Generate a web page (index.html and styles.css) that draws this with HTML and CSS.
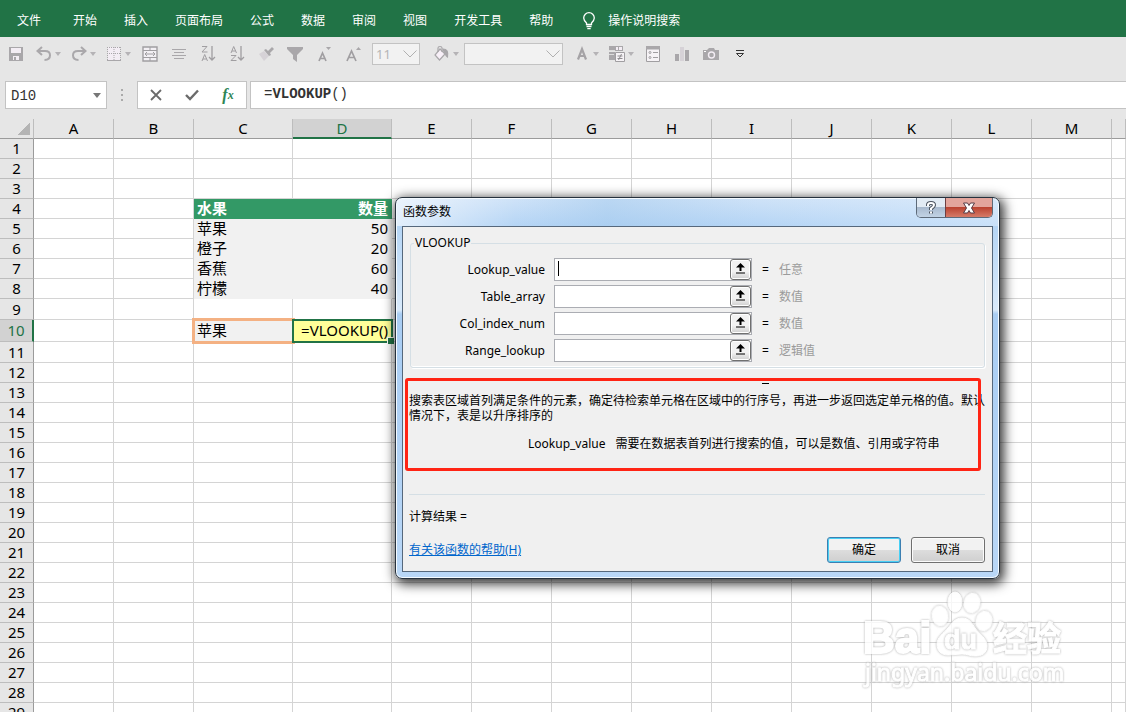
FILE: index.html
```html
<!DOCTYPE html>
<html lang="zh-CN">
  <head>
    <meta charset="utf-8">
    <title>Excel</title>
    <link rel="stylesheet" href="styles.css">
  </head>
  <body>
    <nav class="ribbon">
      <a class="file" href="#">文件</a>
      <a href="#">开始</a>
      <a href="#">插入</a>
      <a href="#">页面布局</a>
      <a href="#">公式</a>
      <a href="#">数据</a>
      <a href="#">审阅</a>
      <a href="#">视图</a>
      <a href="#">开发工具</a>
      <a href="#">帮助</a>
      <a class="tell-me" href="#">
        <svg width="14" height="18" viewBox="0 0 14 18" fill="none" stroke="#fff" stroke-width="1.3"><path d="M4.5 12.5V11C3 9.500 1.700 8.200 1.700 6a5.300 5.300 0 0 1 10.600 0c0 2.200-1.300 3.500-2.800 5v1.500zM4.500 14.500h5M5.300 16.700h3.400"/></svg>
        操作说明搜索
      </a>
    </nav>

    <div class="toolbar">
      <button type="button" aria-label="保存"><svg width="18" height="18" viewBox="0 0 18 18"><path d="M2 2h14v14H2z" fill="#a9a7aa"/><path d="M4 3h10v5H4zM6 11h6v4H6z" fill="#f3edf4"/><path d="M7 12h2v3H7z" fill="#a9a7aa"/></svg></button>
      <button type="button" class="split" aria-label="撤消"><svg width="18" height="18" viewBox="0 0 18 18" fill="none" stroke="#aaa8ab" stroke-width="2"><path d="M7 2L2.500 6 7 10M3 6h7c3 0 5 1.500 5 4.300S13 15 9.500 15"/></svg><i class="arrow"></i></button>
      <button type="button" class="split" aria-label="恢复"><svg width="18" height="18" viewBox="0 0 18 18" fill="none" stroke="#aaa8ab" stroke-width="2"><path d="M11 2l4.500 4L11 10M15 6H8c-3 0-5 1.500-5 4.300S5 15 8.500 15"/></svg><i class="arrow"></i></button>
      <button type="button" class="split" aria-label="边框"><svg width="18" height="18" viewBox="0 0 18 18"><path d="M3 2h12v13H3z" fill="#f3edf4"/><path d="M2 2.500h14M2 8.500h14M2.500 2v13M9 2v13M15.500 2v13" stroke="#a9a7aa" stroke-dasharray="1 1"/><path d="M2 15.500h14" stroke="#a9a7aa"/></svg><i class="arrow"></i></button>
      <button type="button" aria-label="合并后居中"><svg width="18" height="18" viewBox="0 0 18 18" fill="none" stroke="#a09ea1"><path d="M2 2h14v14H2z" fill="#f3f0f4" stroke-width="1.400"/><path d="M2 5.500h14M2 12.500h14M9 2v3M9 13v3M4 9h10M6 7L4 9l2 2M12 7l2 2-2 2"/></svg></button>
      <button type="button" aria-label="居中"><svg width="18" height="18" viewBox="0 0 18 18" stroke="#a9a7aa"><path d="M2 4.500h14M4 7.500h10M2 10.500h14M4 13.500h10"/></svg></button>
      <button type="button" aria-label="降序"><svg width="18" height="18" viewBox="0 0 18 18" fill="none" stroke="#a09ea1"><path d="M3 1.500h5l-5 5.500h5.500M3 16l2.700-6.500L8.500 16M4 14h3.500"/><path d="M13 1v14M10 12l3 3 3-3" stroke-width="1.300"/></svg></button>
      <button type="button" aria-label="升序"><svg width="18" height="18" viewBox="0 0 18 18" fill="none" stroke="#a09ea1"><path d="M3 8l2.700-6.500L8.500 8M4 6h3.500M3 10.500h5l-5 5h5.500"/><path d="M13 1v14M10 12l3 3 3-3" stroke-width="1.300"/></svg></button>
      <button type="button" aria-label="格式刷"><svg width="18" height="18" viewBox="0 0 18 18"><path d="M2 9l5-3 5 5-5 5z" fill="#d6d2d7"/><path d="M7 5l2-1 2 2 4-4 2 2-4 4 1 2-2 1z" fill="#a9a7aa"/></svg></button>
      <button type="button" aria-label="筛选"><svg width="18" height="18" viewBox="0 0 18 18"><path d="M1 2h16v2l-6 6v7l-4-3v-4L1 4z" fill="#a9a7aa"/></svg></button>
      <button type="button" aria-label="减小字号"><svg width="18" height="18" viewBox="0 0 18 18" fill="none" stroke="#a09ea1" stroke-width="1.700"><path d="M4 16l3.500-8L11 16M5 13.500h5"/><path d="M11 2h5l-2.500 3z" fill="#a9a7aa" stroke="none"/></svg></button>
      <button type="button" aria-label="增大字号"><svg width="18" height="18" viewBox="0 0 18 18" fill="none" stroke="#a09ea1" stroke-width="1.700"><path d="M3 16l4.500-10L12 16M4.500 12.500h6"/><path d="M12 5h5l-2.500-3z" fill="#a9a7aa" stroke="none"/></svg></button>
      <span class="combo size">
        <select aria-label="字号"><option>11</option></select>
        <svg width="14" height="8" viewBox="0 0 14 8" fill="none" stroke="#b0b0b0"><path d="M.5 .5L7 7l6.500-6.500"/></svg>
      </span>
      <button type="button" class="split" aria-label="填充颜色"><svg width="18" height="18" viewBox="0 0 18 18" fill="none" stroke="#a9a7aa" stroke-width="1.200"><path d="M7 4l5 5-5.500 6L2 10z" fill="#f8f0f8"/><path d="M5 7V3q0-1.500 2-1.500T9 3v4"/><path d="M10 4q6 0 4.500 8Q12 10 10 4z" fill="#a9a7aa"/></svg><i class="arrow"></i></button>
      <span class="combo style">
        <select aria-label="样式"><option></option></select>
        <svg width="14" height="8" viewBox="0 0 14 8" fill="none" stroke="#b0b0b0"><path d="M.5 .5L7 7l6.500-6.500"/></svg>
      </span>
      <button type="button" class="split first" aria-label="字体颜色"><svg width="18" height="18" viewBox="0 0 18 18" fill="none" stroke="#a5a3a6" stroke-width="2.200"><path d="M5 14.500L9 4l4 10.500M6 11h6"/></svg><i class="arrow"></i></button>
      <button type="button" class="split" aria-label="条件格式"><svg width="18" height="18" viewBox="0 0 18 18"><path d="M1 1h14v5H1zM1 7h6v8H1z" fill="#a9a7aa"/><path d="M8 2h2v3H8zM11 2h3v3h-3z" fill="#f3edf4"/><path d="M1 5.500h6M1 9.500h5" stroke="#ddd"/><path d="M7.500 7.500h9v9h-9z" fill="#f6f3f6" stroke="#a09ea1"/><path d="M9.500 11h5M9.500 13.500h5M13.500 9l-3 6" stroke="#8f8d90"/></svg><i class="arrow"></i></button>
      <button type="button" aria-label="窗体"><svg width="18" height="18" viewBox="0 0 18 18" fill="none" stroke="#a09ea1"><path d="M2.500 1.500h13v15h-13z" fill="#f6f3f6"/><path d="M2 1h14v3.500H2z" fill="#a9a7aa" stroke="none"/><path d="M9 7.500h5M9 12.500h5"/><circle cx="6" cy="7.500" r="1"/><circle cx="6" cy="12.500" r="1"/></svg></button>
      <button type="button" aria-label="图表"><svg width="18" height="18" viewBox="0 0 18 18"><path d="M2 9h4v7H2zM12 5h4v11h-4z" fill="#a9a7aa"/><path d="M7 2h4v14H7z" fill="#d6d2d7"/></svg></button>
      <button type="button" aria-label="照相机"><svg width="18" height="18" viewBox="0 0 18 18"><path d="M1 5h4l2-2h5l1 2h4v10H1z" fill="#a9a7aa"/><circle cx="9.500" cy="10" r="3" fill="#a9a7aa" stroke="#f3edf4" stroke-width="1.400"/><path d="M2 6h2v1H2z" fill="#fff"/></svg></button>
      <button type="button" aria-label="自定义快速访问工具栏"><svg width="10" height="10" viewBox="0 0 10 10" fill="none" stroke="#333"><path d="M1 1.500h8M1.500 4.500h7L5 8z"/></svg></button>
    </div>

    <div class="formula-row">
      <div class="name-box">
        <input type="text" value="D10" aria-label="名称框">
        <i class="arrow"></i>
      </div>
      <svg class="dots" width="2" height="12" viewBox="0 0 2 12" fill="#aaa"><path d="M0 0h2v2H0zM0 5h2v2H0zM0 10h2v2H0z"/></svg>
      <div class="formula-buttons">
        <button type="button" aria-label="取消"><svg width="12" height="12" viewBox="0 0 12 12" stroke="#6b6b6b" stroke-width="1.800"><path d="M1 1l10 10M11 1L1 11"/></svg></button>
        <button type="button" aria-label="输入"><svg width="14" height="12" viewBox="0 0 14 12" fill="none" stroke="#6b6b6b" stroke-width="2.400"><path d="M1 6l4 4 8-8.500"/></svg></button>
        <button type="button" class="fx" aria-label="插入函数">f<sub>x</sub></button>
      </div>
      <div class="formula" role="textbox" aria-label="编辑栏" contenteditable="true" spellcheck="false">=<b>VLOOKUP</b>()</div>
    </div>

    <main class="sheet">
      <table class="grid">
        <colgroup>
          <col class="col-head"><col class="col"><col class="col"><col class="col-wide"><col class="col-wide">
          <col class="col"><col class="col"><col class="col"><col class="col"><col class="col">
          <col class="col"><col class="col"><col class="col"><col class="col"><col>
        </colgroup>
        <thead><tr></tr></thead>
        <tbody></tbody>
      </table>
    </main>

    <form class="dialog" role="dialog" aria-labelledby="dialog-title">
      <header class="title-bar">
        <span id="dialog-title">函数参数</span>
        <div class="window-buttons">
          <button type="button" class="help" aria-label="帮助"><svg width="12" height="14" viewBox="0 0 12 14" fill="none"><path d="M3 5V4q0-2 3-2t3 2q0 1.500-3 3.500V9M6 10.500v2" stroke="#4d5560" stroke-width="4"/><path d="M3 5V4q0-2 3-2t3 2q0 1.500-3 3.500V9M6 10.500v2" stroke="#fff" stroke-width="2"/></svg></button>
          <button type="button" class="close" aria-label="关闭"><svg width="14" height="12" viewBox="0 0 14 12"><path d="M1.500 1h4L7 3.500 8.500 1h4L9.500 6l3 5h-4L7 8.500 5.500 11h-4l3-5z" fill="#fff" stroke="#563b45"/></svg></button>
        </div>
      </header>
      <div class="client">
        <fieldset>
          <legend>VLOOKUP</legend>
          <div class="field">
            <label for="lookup">Lookup_value</label>
            <div class="ref-box"><input id="lookup" type="text"><i class="caret"></i><button type="button" aria-label="选择区域"><svg width="9" height="11" viewBox="0 0 9 11"><path d="M4.500 0L9 4.500H5.500V8h-2V4.500H0zM0 9.500h9v1H0z"/></svg></button></div>
            <span>=</span><output>任意</output>
          </div>
          <div class="field">
            <label for="array">Table_array</label>
            <div class="ref-box"><input id="array" type="text"><button type="button" aria-label="选择区域"><svg width="9" height="11" viewBox="0 0 9 11"><path d="M4.500 0L9 4.500H5.500V8h-2V4.500H0zM0 9.500h9v1H0z"/></svg></button></div>
            <span>=</span><output>数值</output>
          </div>
          <div class="field">
            <label for="index">Col_index_num</label>
            <div class="ref-box"><input id="index" type="text"><button type="button" aria-label="选择区域"><svg width="9" height="11" viewBox="0 0 9 11"><path d="M4.500 0L9 4.500H5.500V8h-2V4.500H0zM0 9.500h9v1H0z"/></svg></button></div>
            <span>=</span><output>数值</output>
          </div>
          <div class="field">
            <label for="range">Range_lookup</label>
            <div class="ref-box"><input id="range" type="text"><button type="button" aria-label="选择区域"><svg width="9" height="11" viewBox="0 0 9 11"><path d="M4.500 0L9 4.500H5.500V8h-2V4.500H0zM0 9.500h9v1H0z"/></svg></button></div>
            <span>=</span><output>逻辑值</output>
          </div>
        </fieldset>
        <div class="explain">
          <div class="value-line"></div>
          <p class="desc">搜索表区域首列满足条件的元素，确定待检索单元格在区域中的行序号，再进一步返回选定单元格的值。默认情况下，表是以升序排序的</p>
          <p class="arg"><b>Lookup_value</b>需要在数据表首列进行搜索的值，可以是数值、引用或字符串</p>
          <div class="mark"></div>
        </div>
        <p class="result">计算结果 =</p>
        <footer>
          <a href="#">有关该函数的帮助(H)</a>
          <button type="submit" class="ok">确定</button>
          <button type="button">取消</button>
        </footer>
      </div>
    </form>

    <svg class="watermark" width="210" height="104" viewBox="0 0 210 104">
      <ellipse cx="95" cy="12" rx="7" ry="10"/>
      <ellipse cx="112" cy="13" rx="8" ry="10" transform="rotate(12 112 13)"/>
      <ellipse cx="80" cy="26" rx="8" ry="10" transform="rotate(-8 80 26)"/>
      <ellipse cx="124" cy="31" rx="8" ry="10" transform="rotate(12 124 31)"/>
      <path d="M102 28c7 0 10 5 13 10 4 6 12 10 12 18s-6 10-12 10c-5 0-8-2-13-2s-9 1-14 1c-7 0-11-4-11-11s7-11 11-16 7-10 14-10z"/>
      <text class="logo" x="3" y="63">Bai</text>
      <text class="du" x="84" y="59">du</text>
      <text class="cn" x="133" y="61">经验</text>
      <text class="site" x="5" y="91">jingyan.baidu.com</text>
    </svg>

    <script type="text/javascript">
      var letters = 'ABCDEFGHIJKLM'.split('').concat(' ');
      var cells = {
        C4: ['水果', 'th'], D4: ['数量', 'th num'],
        C5: ['苹果', 'fill'], D5: ['50', 'fill num'],
        C6: ['橙子', 'fill'], D6: ['20', 'fill num'],
        C7: ['香蕉', 'fill'], D7: ['60', 'fill num'],
        C8: ['柠檬', 'fill'], D8: ['40', 'fill num'],
        C10: ['苹果', 'lookup'], D10: ['=VLOOKUP()', 'active num']
      };
      var heights = {9: 'row-mid', 10: 'row-tall', 11: 'row-mid'};

      var head = '<th class="corner"></th>';
      letters.forEach(function(letter) {
        head += '<th class="' + (letter === 'D' ? 'current' : '') + '">' + letter + '</th>';
      });
      document.querySelector('.grid thead tr').innerHTML = head;

      var body = '';
      for (var row = 1; row <= 29; row++) {
        body += '<tr class="' + (heights[row] || '') + '"><th class="' + (row === 10 ? 'current' : '') + '">' + row + '</th>';
        letters.forEach(function(letter) {
          var cell = cells[letter + row] || ['', ''];
          body += '<td class="' + cell[1] + '">' + cell[0] + '</td>';
        });
        body += '</tr>';
      }
      document.querySelector('.grid tbody').innerHTML = body;
    </script>
  </body>
</html>
```
FILE: styles.css
```css
* {
  box-sizing: border-box;
}
body, html {
  margin: 0;
  height: 100%;
}
body {
  position: relative;
  display: flex;
  flex-direction: column;
  overflow: hidden;
  background: #e6e6e6;
  font: 12px/16px "Noto Sans", "Noto Sans CJK SC", sans-serif;
  color: #000;
}
button, input, select {
  font: inherit;
  color: inherit;
  margin: 0;
  padding: 0;
  border: 0;
  background: none;
}
p {
  margin: 0;
}
.arrow {
  border: 3px solid transparent;
  border-top: 4px solid #b5b3b6;
  border-bottom: 0;
}

/* ribbon */
.ribbon {
  flex: none;
  display: flex;
  align-items: center;
  gap: 27px;
  height: 37px;
  padding: 4px 17px 0;
  background: #217346;
  white-space: nowrap;
}
.ribbon a {
  color: #fff;
  text-decoration: none;
}
.ribbon .file {
  margin-right: 5px;
}
.ribbon .tell-me {
  display: flex;
  align-items: center;
  gap: 12px;
  margin-left: 2px;
}

/* quick access toolbar */
.toolbar {
  flex: none;
  display: flex;
  align-items: center;
  height: 33px;
  padding-left: 1px;
}
.toolbar button {
  flex: none;
  display: flex;
  align-items: center;
  justify-content: center;
  width: 29px;
  height: 24px;
}
.toolbar .split {
  width: 35px;
  gap: 2px;
}
.combo {
  position: relative;
  height: 22px;
}
.combo select {
  appearance: none;
  width: 100%;
  height: 22px;
  padding-left: 3px;
  border: 1px solid #c3c3c3;
  background: #f2f2f2;
  font-size: 13px;
  color: #b5b5b5;
}
.combo svg {
  position: absolute;
  right: 3px;
  top: 7px;
  pointer-events: none;
}
.size {
  width: 48px;
  margin: 0 8px 0 5px;
}
.style {
  width: 99px;
  margin-left: 1px;
}
.toolbar .first {
  margin-left: 5px;
}

/* formula bar */
.formula-row {
  flex: none;
  display: flex;
  align-items: center;
  height: 49px;
  padding: 11px 0 10px 5px;
  font: 14px/26px "Liberation Mono", monospace;
  color: #333;
}
.name-box, .formula-buttons, .formula {
  height: 28px;
  border: 1px solid #c3c3c3;
  background: #fff;
}
.name-box {
  display: flex;
  align-items: center;
  width: 102px;
  padding: 0 5px;
}
.name-box input {
  flex: 1;
  min-width: 0;
  padding-top: 2px;
}
.name-box .arrow {
  border-width: 5px 4px 0;
  border-top-color: #777;
}
.dots {
  margin: 0 14px;
}
.formula-buttons {
  display: flex;
  width: 110px;
  margin-right: 3px;
}
.formula-buttons button {
  flex: 1;
  display: flex;
  align-items: center;
  justify-content: center;
}
.formula-buttons .fx {
  font: italic bold 16px/20px "Liberation Serif", serif;
  color: #2e8555;
}
.fx sub {
  font-size: 12px;
}
.formula {
  flex: 1;
  border-right: 0;
  padding-left: 13px;
  line-height: 24px;
}

/* sheet */
.sheet {
  flex: 1;
  min-height: 0;
  overflow: hidden;
}
.grid {
  table-layout: fixed;
  width: 100%;
  border-spacing: 0;
  background: #fff;
  font-size: 15px;
  line-height: 19px;
}
.col-head {
  width: 34px;
}
.col {
  width: 80px;
}
.col-wide {
  width: 99px;
}
.grid th {
  padding: 0;
  background: #e6e6e6;
  border-right: 1px solid #9b9b9b;
  border-bottom: 1px solid #bdbdbd;
  font-weight: normal;
}
.grid thead th {
  height: 20px;
  border-right-color: #bdbdbd;
  border-bottom-color: #9b9b9b;
}
.grid .corner {
  background: linear-gradient(135deg, transparent 50%, #b4b4b4 50%) 18px 4px / 12px 12px no-repeat #e6e6e6;
}
.grid .current {
  background: #d2d2d2;
  color: #217346;
}
.grid thead .current {
  border-bottom: 2px solid #217346;
  line-height: 18px;
}
.grid tbody .current {
  border-right: 2px solid #217346;
}
.grid td {
  height: 20px;
  padding: 0 3px;
  border-right: 1px solid #d4d4d4;
  border-bottom: 1px solid #d4d4d4;
  white-space: nowrap;
}
.row-mid td {
  height: 21px;
}
.row-tall td {
  height: 22px;
}
.grid .th {
  background: #339966;
  border-color: #339966;
  color: #fff;
  font-weight: bold;
}
.grid .fill {
  background: #f1f1f1;
  border-color: #f1f1f1;
}
.grid .num {
  text-align: right;
}
.grid .lookup {
  background: #f1f1f1;
  outline: 3px solid #f4b183;
  outline-offset: -1px;
}
.grid .active {
  position: relative;
  background: #ffff99;
  border-color: #ffff99;
  outline: 2px solid #217346;
  outline-offset: -1px;
}
.grid .active::after {
  content: "";
  position: absolute;
  right: -3px;
  bottom: -3px;
  width: 6px;
  height: 6px;
  background: #217346;
  border: solid #fff;
  border-width: 1px 0 0 1px;
}

/* function arguments dialog */
.dialog {
  position: absolute;
  left: 395px;
  top: 197px;
  width: 605px;
  padding: 0 6px 6px;
  border: 1px solid #26313d;
  border-radius: 7px;
  background:
    linear-gradient(to right, #ffffff99, transparent 20%, #9cc5ea66 35%, transparent 60%, #e8f3ff66) 0 0 / 100% 28px no-repeat,
    linear-gradient(#cfe3f8, #b5d5f5 28px, #d9eafb 112px, #a9cdf3 116px, #b9d7f7);
  box-shadow: inset 0 0 0 1px #f4faff, 2px 3px 12px 2px rgba(0, 0, 0, .8);
}
.title-bar {
  display: flex;
  justify-content: space-between;
  height: 28px;
  padding-left: 1px;
  line-height: 28px;
}
.window-buttons {
  display: flex;
  height: 20px;
  border: 1px solid #5d6a79;
  border-top: 0;
  border-radius: 0 0 5px 5px;
  overflow: hidden;
}
.window-buttons button {
  display: flex;
  align-items: center;
  justify-content: center;
}
.window-buttons .help {
  width: 28px;
  background: linear-gradient(#e2ebf4 45%, #a9bace 50%, #c2d3e5);
}
.window-buttons .close {
  width: 47px;
  border-left: 1px solid #6d3f42;
  background: linear-gradient(#e3a59c 45%, #bb4331 50%, #d67b68);
}
.client {
  padding: 8px 7px 8px 6px;
  border: 1px solid #56687c;
  background: #f0f0f0;
}
fieldset {
  margin: 0 0 0 1px;
  padding: 7px 0 1px;
  border: 1px solid #d5dfe5;
  border-radius: 3px;
  box-shadow: inset 0 -1px #fff, 1px 1px #fff;
}
legend {
  margin-left: 3px;
  padding: 0 1px;
  font-size: 12px;
}
.field {
  display: flex;
  align-items: center;
  height: 23px;
  margin-bottom: 4px;
}
.field label {
  width: 134px;
  margin-right: 9px;
  text-align: right;
}
.ref-box {
  position: relative;
  display: flex;
  width: 198px;
  height: 23px;
  margin-right: 10px;
  border: 1px solid #abadb3;
  background: #fff;
}
.ref-box input {
  flex: 1;
  min-width: 0;
  padding: 0 4px;
}
.caret {
  position: absolute;
  left: 3px;
  top: 2px;
  width: 1px;
  height: 15px;
  background: #000;
}
.ref-box button {
  display: flex;
  align-items: center;
  justify-content: center;
  width: 21px;
  padding-bottom: 2px;
  border: 1px solid #707070;
  border-radius: 3px;
  background: linear-gradient(#f2f2f2 60%, #cfcfcf);
  box-shadow: inset 0 0 0 1px #fff;
}
.field output {
  margin-left: 10px;
  color: #9b9b9b;
}
.explain {
  position: relative;
  height: 127px;
  border-bottom: 1px solid #d5dfe5;
}
/* only the lower stroke of the equals sign shows here */
.value-line {
  height: 17px;
  margin-left: 353px;
  background: linear-gradient(#000, #000) 0 15px / 7px 1px no-repeat;
}
.desc {
  padding-top: 8px;
  line-height: 15px;
}
.arg {
  padding: 13px 0 0 119px;
  line-height: 15px;
}
.arg b {
  margin-right: 10px;
  font-weight: normal;
}
.mark {
  position: absolute;
  left: -4px;
  top: 10px;
  width: 576px;
  height: 93px;
  border: 3px solid #ff2414;
  border-radius: 3px;
}
.result {
  padding: 14px 0 12px;
}
footer {
  display: flex;
  align-items: center;
  gap: 10px;
}
footer a {
  margin-right: auto;
  color: #0066cc;
}
footer button {
  width: 74px;
  height: 26px;
  border: 1px solid #707070;
  border-radius: 3px;
  background: linear-gradient(#f2f2f2 50%, #dddddd 50%, #cfcfcf);
  box-shadow: inset 0 0 0 1px #fbfbfb;
}
footer .ok {
  border-color: #3c7fb1;
  box-shadow: inset 0 0 0 1px #48d0f5;
}

.watermark {
  position: absolute;
  left: 860px;
  top: 590px;
  opacity: .8;
  fill: #fff;
  stroke: #fff;
  stroke-width: 1px;
}
.watermark > * {
  filter: drop-shadow(0 0 1px #999);
}
.logo {
  font: bold 44px "Liberation Sans", sans-serif;
  stroke-width: 2px;
}
.du {
  font: bold 27px "Liberation Sans", sans-serif;
}
.cn {
  font: bold 34px "Noto Sans CJK SC", sans-serif;
}
.site {
  font: 23px "Noto Sans", sans-serif;
}
```
